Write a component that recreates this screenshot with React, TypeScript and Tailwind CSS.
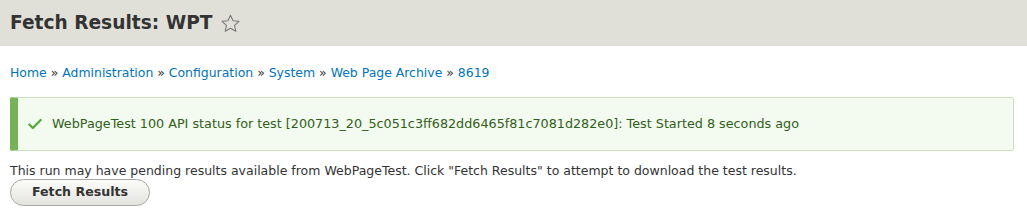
export default function App() {
  const crumbs = ['Home', 'Administration', 'Configuration', 'System', 'Web Page Archive', '8619'];

  return (
    <div className="min-h-[224px] bg-white text-[#333] font-['DejaVu_Sans',sans-serif]">
      {/* Page title bar */}
      <div className="flex h-[46px] items-center bg-[#e0e0d8] px-[10px]">
        <h1 className="text-[18.6px] font-bold leading-none text-[#333]">Fetch Results: WPT</h1>
        <svg className="ml-[8px] h-[21px] w-[21px]" viewBox="0 0 24 24" fill="none" stroke="#777" strokeWidth={1.2} strokeLinejoin="round">
          <path d="M12 2.5l2.9 6.3 6.8.7-5.1 4.6 1.5 6.8L12 17.4l-6.1 3.5 1.5-6.8-5.1-4.6 6.8-.7z" />
        </svg>
      </div>

      <div className="px-[10px]">
        {/* Breadcrumb */}
        <div className="mt-[19px] text-[12.45px] leading-[16px]">
          {crumbs.map((c, i) => (
            <span key={c}>
              <a className="text-[#0074bd]">{c}</a>
              {i < crumbs.length - 1 && <span className="text-[#333]"> » </span>}
            </span>
          ))}
        </div>

        {/* Status message */}
        <div className="mt-[16px] mr-[3px] flex h-[54px] items-center rounded-[2px] border border-[#c9e1bd] border-l-[8px] border-l-[#77b259] bg-[#f3faef] pl-[10px] text-[12.75px] text-[#325e1c]">
          <svg className="mr-[10px] h-[14px] w-[14px]" viewBox="0 0 16 16">
            <path d="M1.5 8.5l4 4 9-9" fill="none" stroke="#59a83a" strokeWidth={2.6} strokeLinecap="round" strokeLinejoin="round" />
          </svg>
          <span>WebPageTest 100 API status for test [200713_20_5c051c3ff682dd6465f81c7081d282e0]: Test Started 8 seconds ago</span>
        </div>

        {/* Help text + button */}
        <p className="mt-[12px] text-[12.5px] leading-[16px]">
          This run may have pending results available from WebPageTest. Click "Fetch Results" to attempt to download the test results.
        </p>
        <button className="mt-0 h-[27px] w-[140px] rounded-full border border-[#a6a6a6] bg-gradient-to-b from-[#fcfcfa] to-[#e3e3de] text-[12.6px] font-bold text-[#333]">
          Fetch Results
        </button>
      </div>
    </div>
  );
}
